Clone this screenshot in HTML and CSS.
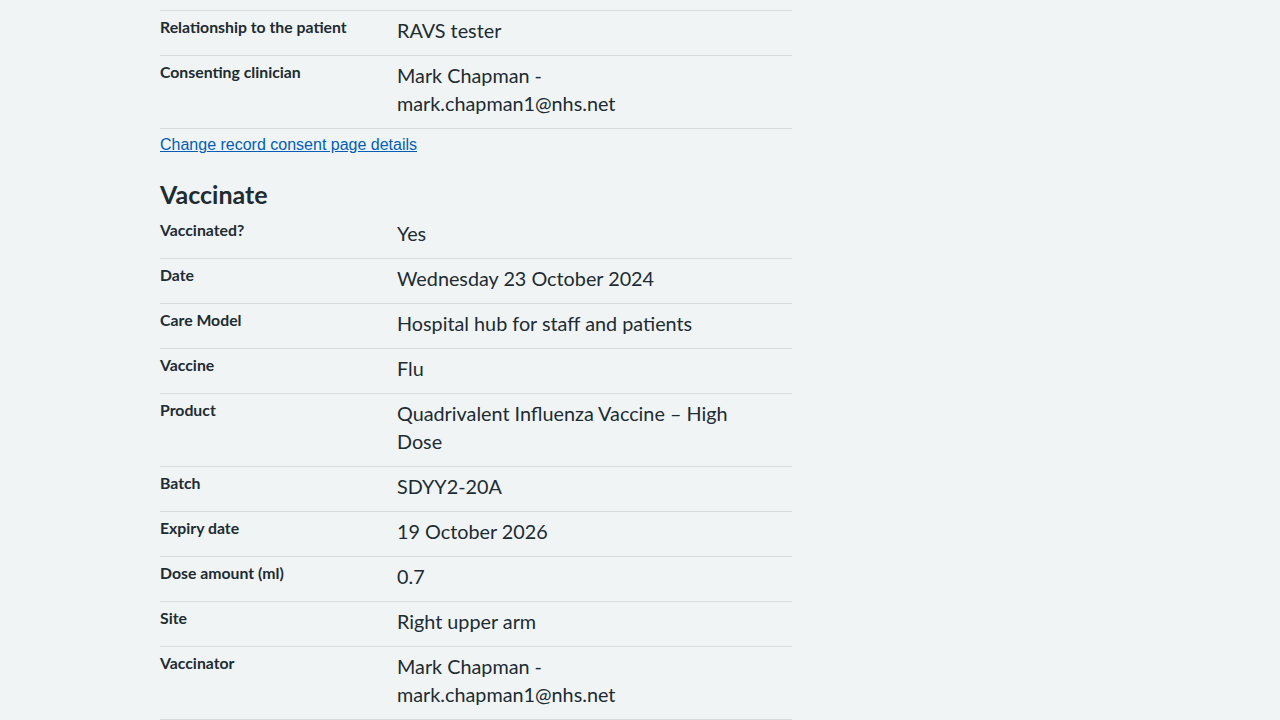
FILE: index.html
```html
<!DOCTYPE html>
<html lang="en">
<head>
<meta charset="utf-8">
<title>Check and confirm</title>
<link rel="stylesheet" href="styles.css">
</head>
<body>
<main class="page">
  <dl class="summary">
    <div class="row"><dt class="key">Relationship to the patient</dt><dd class="value">RAVS tester</dd></div>
    <div class="row"><dt class="key">Consenting clinician</dt><dd class="value">Mark Chapman - mark.chapman1@nhs.net</dd></div>
  </dl>
  <a class="change-link" href="#">Change record consent page details</a>
  <h2 class="section-title">Vaccinate</h2>
  <dl class="summary summary-open">
    <div class="row"><dt class="key">Vaccinated?</dt><dd class="value">Yes</dd></div>
    <div class="row"><dt class="key">Date</dt><dd class="value">Wednesday 23 October 2024</dd></div>
    <div class="row"><dt class="key">Care Model</dt><dd class="value">Hospital hub for staff and patients</dd></div>
    <div class="row"><dt class="key">Vaccine</dt><dd class="value">Flu</dd></div>
    <div class="row"><dt class="key">Product</dt><dd class="value">Quadrivalent Influenza Vaccine – High Dose</dd></div>
    <div class="row"><dt class="key">Batch</dt><dd class="value">SDYY2-20A</dd></div>
    <div class="row"><dt class="key">Expiry date</dt><dd class="value">19 October 2026</dd></div>
    <div class="row"><dt class="key">Dose amount (ml)</dt><dd class="value">0.7</dd></div>
    <div class="row"><dt class="key">Site</dt><dd class="value">Right upper arm</dd></div>
    <div class="row"><dt class="key">Vaccinator</dt><dd class="value">Mark Chapman - mark.chapman1@nhs.net</dd></div>
  </dl>
</main>
</body>
</html>
```
FILE: styles.css
```css
html, body {
  margin: 0;
  padding: 0;
  background: #f0f4f5;
}
body {
  font-family: Lato, "Noto Sans", sans-serif;
  color: #212b32;
}
.page {
  width: 632px;
  margin-left: 160px;
  padding-top: 10px;
}
.summary {
  margin: 0;
  padding: 0;
  border-top: 1px solid #d8dde0;
}
.summary-open {
  border-top: none;
}
.row {
  display: grid;
  grid-template-columns: 237px 345px;
  border-bottom: 1px solid #d8dde0;
  padding: 6px 0 10px;
  min-height: 28px;
}
.key {
  margin: 0;
  font-weight: 700;
  font-size: 15.8px;
  line-height: 20px;
}
.value {
  margin: -1px 0 1px;
  font-size: 19.8px;
  line-height: 28px;
}
.change-link {
  display: inline-block;
  margin-top: 7px;
  font-family: "Liberation Sans", Arial, sans-serif;
  font-size: 16px;
  line-height: 18px;
  color: #005eb8;
  text-decoration: underline;
}
.section-title {
  margin: 24px 0 4px;
  font-size: 25px;
  line-height: 32px;
  font-weight: 700;
}
```
